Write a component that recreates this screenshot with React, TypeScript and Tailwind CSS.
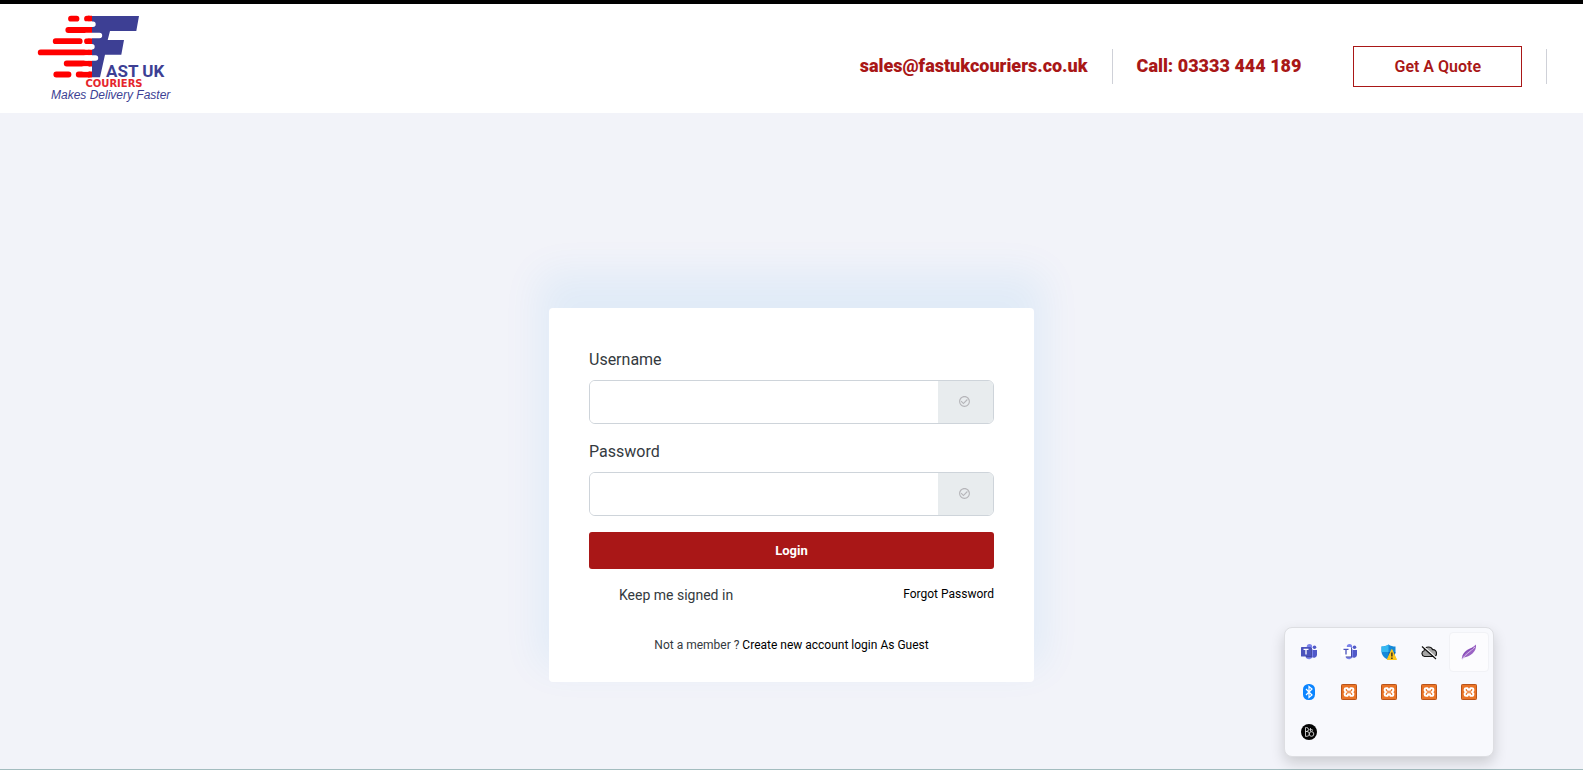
import { useState } from "react";
import type { ReactNode } from "react";
import { MdCheckCircleOutline } from "react-icons/md";

function Logo() {
  return (
    <svg width="136" height="92" viewBox="0 0 136 92" role="img" aria-label="Fast UK Couriers">
      <path d="M56 4H103L100.300 19H74L71.700 28H88L85.300 42.700H69L64 65.300H56Z" fill="#3d3f94" />
      {/* speed lines */}
      <g stroke="#f00" strokeWidth="5.800" strokeLinecap="round">
        <path d="M35 6.700H40.500M51 6.700H53M32.300 18H53M19.700 29.200H43.700M51 29.200H53M4.700 40.400H53M30.700 51.500H53M20.300 62.500H32.500M42.700 62.500H53" />
      </g>
      <path
        d="M52 3.800H56V9.600H52ZM52 15.100H56V20.900H52ZM52 26.300H56V32.100H52ZM52 37.500H56V43.300H52ZM52 48.600H56V54.400H52ZM52 59.600H56V65.400H52Z"
        fill="#f00"
      />
      <g stroke="#fff" strokeWidth="5.400" strokeLinecap="round">
        <path d="M50 12.300H57M50 23.500H63.500M50 34.800H56M50 46H59.500M48 57H51.500" />
      </g>
      <text x="70" y="65" fill="#3d3f94" fontSize="17" fontWeight="700" fontFamily="Roboto, sans-serif">
        AST UK
      </text>
      <text
        x="78"
        y="75"
        textAnchor="middle"
        fill="#e5252c"
        fontSize="10"
        fontWeight="700"
        fontFamily="'DejaVu Sans', sans-serif"
      >
        COURIERS
      </text>
      <text
        x="15"
        y="87"
        fill="#3d3f94"
        fontSize="12"
        fontStyle="italic"
        fontFamily="'Liberation Sans', sans-serif"
      >
        Makes Delivery Faster
      </text>
    </svg>
  );
}

function Header() {
  return (
    <header className="flex h-[113px] items-center justify-between border-t-4 border-black bg-white px-9">
      <a href="#" className="mb-0.5">
        <Logo />
      </a>
      <nav className="mt-4 flex items-center text-[#a91717]">
        <a href="mailto:sales@fastukcouriers.co.uk" className="mb-0.5 text-lg font-black">
          sales@fastukcouriers.co.uk
        </a>
        <span className="mx-6 h-[35px] w-px bg-[#cfd1d8]" />
        <a href="tel:03333444189" className="mb-0.5 text-lg font-black">
          Call: 03333 444 189
        </a>
        <button
          type="button"
          className="ml-[52px] h-[41px] cursor-pointer border border-[#a91717] px-10 text-base font-semibold"
        >
          Get A Quote
        </button>
        <span className="ml-6 h-[35px] w-px bg-[#cfd1d8]" />
      </nav>
    </header>
  );
}

interface FieldProps {
  id: string;
  label: string;
  type: string;
  value: string;
  onChange: (value: string) => void;
}

function Field({ id, label, type, value, onChange }: FieldProps) {
  return (
    <div className="mb-4">
      <label htmlFor={id} className="mb-2 block text-base leading-6">
        {label}
      </label>
      <div className="flex h-11 overflow-hidden rounded-md border border-[#ced4da]">
        <input
          id={id}
          type={type}
          value={value}
          onChange={(e) => onChange(e.target.value)}
          className="min-w-0 flex-1 bg-white px-4 text-sm outline-none"
        />
        <span className="flex w-[55px] items-center justify-center bg-[#e8ecee] pr-0.5 pb-0.5 text-[#b5b5b9]">
          <MdCheckCircleOutline size={13} />
        </span>
      </div>
    </div>
  );
}

function LoginCard() {
  const [username, setUsername] = useState("");
  const [password, setPassword] = useState("");

  return (
    <form
      onSubmit={(e) => e.preventDefault()}
      className="w-full max-w-[485px] self-start rounded bg-white px-10 pt-10 pb-[25px] text-[#343a40] shadow-[0_-25px_38px_11px_rgba(8,143,220,0.07)]"
    >
      <Field id="username" label="Username" type="text" value={username} onChange={setUsername} />
      <Field id="password" label="Password" type="password" value={password} onChange={setPassword} />
      <button
        type="submit"
        className="h-[37px] w-full cursor-pointer rounded-[3px] bg-[#a91717] text-[13px] font-bold text-white"
      >
        Login
      </button>
      <div className="mt-4 flex items-start justify-between">
        <label className="flex items-center text-sm leading-5">
          <input type="checkbox" className="mr-3 size-[18px] appearance-none" />
          Keep me signed in
        </label>
        <a href="#" className="text-xs leading-[18px] text-black">
          Forgot Password
        </a>
      </div>
      <div className="mt-7 text-center text-xs leading-6">
        <span>Not a member ? </span>
        <a href="#" className="text-black">
          Create new account
        </a>{" "}
        <a href="#" className="text-black">
          login As Guest
        </a>
      </div>
    </form>
  );
}

function TeamsIcon({ light = false }: { light?: boolean }) {
  return (
    <svg width="16" height="16" viewBox="0 0 16 16">
      <circle cx="8.500" cy="2.800" r="2.700" fill="#7b83eb" />
      <circle cx="13.500" cy="3.200" r="1.800" fill="#5059c9" />
      <path d="M11 6H16V11A3 3 0 0 1 11 13Z" fill="#5059c9" />
      <path d="M4.500 5.500H12V12A4 4 0 0 1 4.500 13Z" fill="#7b83eb" />
      <path d="M5 4H10.800V13.300H5Z" fill="#3a3f8f" />
      <rect y="3" width="10" height="9.500" rx="0.600" fill={light ? "#fff" : "#4b53bc"} />
      <path d="M2.500 5.300H7.500M5 5.300V10.500" stroke={light ? "#4b53bc" : "#fff"} strokeWidth="1.300" />
    </svg>
  );
}

function ShieldIcon() {
  return (
    <svg width="16" height="16" viewBox="0 0 16 16">
      <path
        d="M7.500 0.500C9.500 2 12 2.500 14.500 2.500V7.500C14.500 11.500 11 14.500 7.500 16C4 14.500 0.500 11.500 0.500 7.500V2.500C3 2.500 5.500 2 7.500 0.500Z"
        fill="#1689d8"
      />
      <path d="M7.500 0.500V8H0.500V2.500C3 2.500 5.500 2 7.500 0.500Z" fill="#35b8f1" />
      <path d="M7.500 8H14.500C14 12 11 14.500 7.500 16Z" fill="#0a63b6" />
      <path d="M10.800 5.500L15.500 15.500H6.300Z" fill="#ffc61a" stroke="#ffc61a" strokeLinejoin="round" />
      <path d="M10.900 8.500V12.500M10.900 13.500V15" stroke="#222" strokeWidth="1.300" />
    </svg>
  );
}

function CloudOffIcon() {
  return (
    <svg width="16" height="16" viewBox="0 0 16 16">
      <path
        d="M3.500 12.500A3 3 0 0 1 3 6.700C3.500 4.500 5.300 3 7.500 3C9.500 3 11 4 11.700 5.700C14 5.500 15.500 7.200 15.500 9.200C15.500 11 14.200 12.500 12.500 12.500Z"
        fill="#a5a5a5"
        stroke="#151515"
        strokeWidth="1.200"
      />
      <path d="M2.500 2.500L15.500 14" stroke="#fff" strokeWidth="1.500" />
      <path d="M1 2.500L15 15" stroke="#111" strokeWidth="1.200" />
    </svg>
  );
}

function FeatherIcon() {
  return (
    <svg width="16" height="16" viewBox="0 0 16 16">
      <path
        d="M15 0.500C15.500 4 14 7 11.500 9.500C9 12 5.500 13 3 13.500L1 15.500L0.800 14.500C1 11 3 8 6 6C9 4 12.500 3.500 15 0.500Z"
        fill="#9a63c4"
      />
      <path d="M1 15C4 11 9 7.500 14 3" stroke="#dcc5ec" strokeWidth="0.900" fill="none" />
      <path d="M2 11.500C4 7.500 9 5.500 12 4" stroke="#7a3fae" strokeWidth="0.800" fill="none" />
    </svg>
  );
}

function BluetoothIcon() {
  return (
    <svg width="12" height="16" viewBox="0 0 12 16">
      <rect width="12" height="16" rx="5.500" fill="#0a84ff" />
      <path d="M3 5L9 11L6 13.500V2.500L9 5L3 11" fill="none" stroke="#fff" strokeWidth="1.200" />
    </svg>
  );
}

function XamppIcon() {
  return (
    <svg width="16" height="16" viewBox="0 0 16 16">
      <rect x="0.500" y="0.500" width="15" height="15" rx="0.800" fill="#ea7426" stroke="#b9541a" />
      <path
        d="M5 4H6.500L7.500 5.500H8.500L9.500 4H11A1.500 1.500 0 0 1 12.500 5.500V6.500L11.500 8L12.500 9.500V10.500A1.500 1.500 0 0 1 11 12H9.500L8.500 10.500H7.500L6.500 12H5A1.500 1.500 0 0 1 3.500 10.500V9.500L4.500 8L3.500 6.500V5.500A1.500 1.500 0 0 1 5 4Z"
        fill="#fff"
        stroke="#fff"
        strokeWidth="1.600"
        strokeLinejoin="round"
      />
      <path
        d="M5.300 5V6L6.300 7.200H9.700L10.700 6V5M5.300 11V10L6.300 8.800H9.700L10.700 10V11"
        fill="none"
        stroke="#ea7426"
        strokeWidth="1.100"
      />
    </svg>
  );
}

function BoIcon() {
  return (
    <svg width="16" height="16" viewBox="0 0 16 16">
      <circle cx="8" cy="8" r="8" fill="#050505" />
      <g fill="none" stroke="#d5d5d5" strokeWidth="0.900">
        <path d="M4.500 3.500V12.500M4.500 3.500H5.500A2 2 0 0 1 5.500 7.500H4.500M4.500 7.500H6A2.400 2.400 0 0 1 6 12.300H4.500" />
        <circle cx="10.500" cy="10" r="2.300" />
        <path d="M9.500 7.500V4M8.300 5.700H11.500M10.500 7.500L11.800 6.500" />
      </g>
    </svg>
  );
}

const trayIcons: { name: string; icon: ReactNode }[] = [
  { name: "Teams", icon: <TeamsIcon /> },
  { name: "Teams classic", icon: <TeamsIcon light /> },
  { name: "Security", icon: <ShieldIcon /> },
  { name: "Cloud storage offline", icon: <CloudOffIcon /> },
  { name: "Feather", icon: <FeatherIcon /> },
  { name: "Bluetooth", icon: <BluetoothIcon /> },
  { name: "XAMPP 1", icon: <XamppIcon /> },
  { name: "XAMPP 2", icon: <XamppIcon /> },
  { name: "XAMPP 3", icon: <XamppIcon /> },
  { name: "XAMPP 4", icon: <XamppIcon /> },
  { name: "Audio", icon: <BoIcon /> },
];

function Tray() {
  return (
    <div className="absolute right-[89px] bottom-3 grid grid-cols-5 rounded-lg border border-[#dddee2] bg-[#f8f9fd] p-1 shadow-[0_6px_14px_rgba(0,0,0,0.16)]">
      {trayIcons.map((item) => (
        <button
          key={item.name}
          type="button"
          aria-label={item.name}
          className={
            item.name === "Feather"
              ? "flex size-10 items-center justify-center rounded border border-[#f1f2f6] bg-[#fcfcfe]"
              : "flex size-10 items-center justify-center"
          }
        >
          {item.icon}
        </button>
      ))}
    </div>
  );
}

export default function App() {
  return (
    <div className="relative flex min-h-screen flex-col border-b border-[#a3bcbf] bg-[#f2f3f9] font-[Roboto,sans-serif]">
      <Header />
      <main className="flex flex-1 justify-center px-4 pt-[195px] pb-20">
        <LoginCard />
      </main>
      <Tray />
    </div>
  );
}
